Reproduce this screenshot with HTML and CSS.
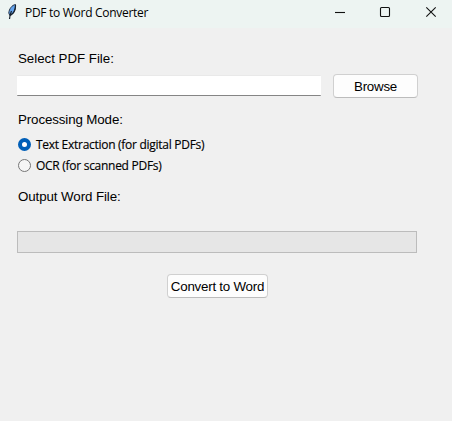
FILE: index.html
```html
<!DOCTYPE html>
<html lang="en">
<head>
<meta charset="utf-8">
<title>PDF to Word Converter</title>
<link rel="stylesheet" href="styles.css">
</head>
<body>
<header class="titlebar">
  <svg class="feather" width="12" height="18" viewBox="0 0 12 18">
    <path d="M9.500 1.500C6 2 3 6 2.800 10l1 2.500C7.500 11.500 10 7 9.500 1.500z" fill="#62a3ee" stroke="#26354a" stroke-width="1"/>
    <path d="M9.500 2C9.500 7 7 11 4 12.500M5.500 8C4 11 3.800 13 3.500 16" fill="none" stroke="#17202b" stroke-width="1.200"/>
  </svg>
  <h1 class="title">PDF to Word Converter</h1>
  <div class="controls">
    <svg width="46" height="28" viewBox="0 0 46 28"><path d="M15 12.500h10"/></svg>
    <svg width="46" height="28" viewBox="0 0 46 28"><rect x="14.500" y="7.500" width="9" height="9" rx="1"/></svg>
    <svg width="46" height="28" viewBox="0 0 46 28"><path d="M14.300 7.300l9.400 9.400M23.700 7.300l-9.400 9.400"/></svg>
  </div>
</header>
<main class="content">
  <label class="label select" for="pdf">Select PDF File:</label>
  <div class="file-row">
    <input class="entry" id="pdf" type="text">
    <button class="button browse"><span>Browse</span></button>
  </div>
  <div class="label mode">Processing Mode:</div>
  <div class="option"><span class="radio checked"></span><span class="text-extraction">Text Extraction (for digital PDFs)</span></div>
  <div class="option"><span class="radio"></span><span class="ocr">OCR (for scanned PDFs)</span></div>
  <div class="label output">Output Word File:</div>
  <div class="progress"></div>
  <button class="button convert"><span>Convert to Word</span></button>
</main>
</body>
</html>
```
FILE: styles.css
```css
* { box-sizing: border-box; }
body {
  margin: 0;
  height: 421px;
  overflow: hidden;
  background: #f0f0f0;
  color: #000;
  font-family: "Liberation Sans", Arial, sans-serif;
  font-size: 13.333px;
}
.titlebar {
  display: flex;
  height: 28px;
  padding-left: 6px;
  background: #edf4f2;
}
.feather { margin-top: 3px; }
.title {
  margin: 0 0 0 7px;
  font: 12px/26px "Open Sans", "Noto Sans", sans-serif;
  letter-spacing: -0.29px;
  white-space: nowrap;
}
.controls { display: flex; margin-left: auto; margin-right: -6px; }
.controls svg { fill: none; stroke: #111; stroke-width: 1.1; }
.content { padding-left: 17px; }
.label { display: block; height: 16px; line-height: 16px; margin-left: 1px; }
.select { margin-top: 23px; letter-spacing: -0.03px; }
.file-row { display: flex; gap: 12px; margin-top: 7px; height: 24px; }
.entry {
  width: 304px;
  height: 21px;
  margin-top: 1px;
  padding: 0 4px;
  background: #fff;
  border: solid #e9e9e9;
  border-width: 1px 0;
  border-bottom-color: #858585;
  border-radius: 1px;
  outline: 0;
}
.button {
  display: flex;
  align-items: center;
  justify-content: center;
  height: 24px;
  padding: 0;
  background: #fdfdfd;
  border: 1px solid #d0d0d0;
  border-bottom-color: #bcbcbc;
  border-radius: 4px;
  color: #000;
  font: inherit;
  white-space: nowrap;
}
.browse { width: 85px; letter-spacing: -0.25px; }
.mode { margin-top: 14px; margin-bottom: 6px; letter-spacing: -0.12px; }
.option {
  display: flex;
  align-items: center;
  gap: 5px;
  height: 21px;
  padding-left: 1px;
  font: 12px/20px "Open Sans", "Noto Sans", sans-serif;
  letter-spacing: -0.28px;
  -webkit-text-stroke: 0.15px #000;
}
.radio {
  width: 13px;
  height: 13px;
  border: 1px solid #777;
  border-radius: 50%;
  background: #f5f5f5;
}
.checked { border: 4px solid #005fb8; background: #fff; }
.output { margin-top: 13px; letter-spacing: -0.09px; }
.progress {
  width: 400px;
  height: 22px;
  margin-top: 26px;
  background: #e6e6e6;
  border: 1px solid #bcbcbc;
}
.convert { width: 101px; margin: 21px 0 0 150px; letter-spacing: -0.23px; }
```
